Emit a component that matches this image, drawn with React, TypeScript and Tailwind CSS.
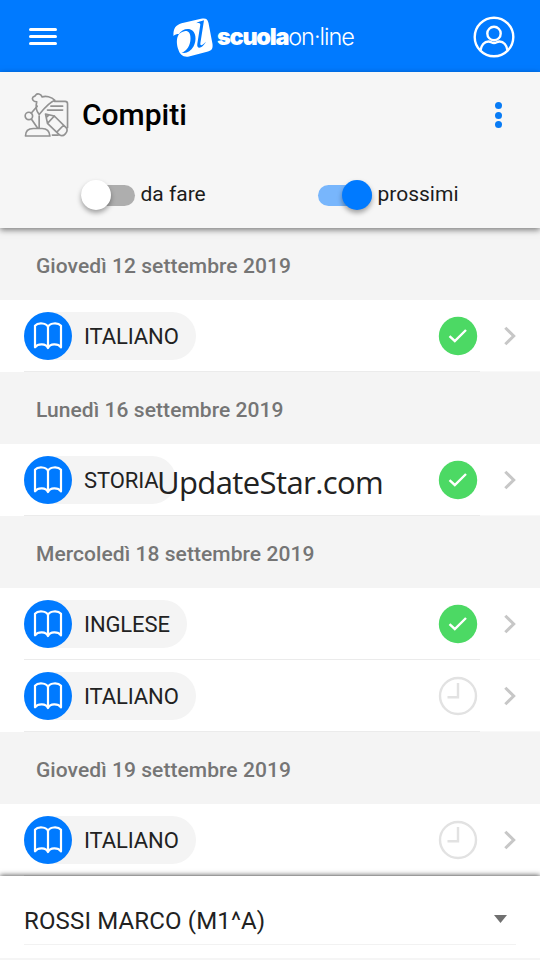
type Task = { subject: string; done: boolean };
type Day = { date: string; tasks: Task[] };

const days: Day[] = [
  { date: "Giovedì 12 settembre 2019", tasks: [{ subject: "ITALIANO", done: true }] },
  { date: "Lunedì 16 settembre 2019", tasks: [{ subject: "STORIA", done: true }] },
  {
    date: "Mercoledì 18 settembre 2019",
    tasks: [
      { subject: "INGLESE", done: true },
      { subject: "ITALIANO", done: false },
    ],
  },
  { date: "Giovedì 19 settembre 2019", tasks: [{ subject: "ITALIANO", done: false }] },
];

function Logo() {
  return (
    <div className="flex items-center pt-[3px]">
      <svg className="-mt-px" width="42" height="42" viewBox="0 0 42 42" fill="none">
        <path
          d="M1.500 20C1 12 4 9 9.500 7.200L29 2.800C34 1.900 35.500 3 36.500 7L40.500 28C41 33 39.500 34.500 36 35.500L17 40.500C11 41.500 8 38.500 6.500 34C4.500 29 4 22 7 18C4.500 18 3 18.500 1.500 20Z"
          fill="#fff"
        />
        <path
          d="M6.500 18.500C9 14 14.500 12 18.500 13.500C24 15.500 25 24 21.500 30.500C18.500 36 13.500 38 9.500 36.500C15 35.500 18.500 29 18.500 22.500C18.500 16.500 16 14.500 12.500 15.200C10 15.700 8 17 6.500 18.500Z"
          fill="#007aff"
        />
        <path
          d="M24 7.200C26.500 5.700 28.500 5.400 32 4.300L28.400 27C28 30.500 30.500 29.500 33.800 25.800C31.500 31.500 24.500 34.500 25.300 28L28.300 8.800C28.500 7.200 27 6.800 24 7.200Z"
          fill="#007aff"
        />
      </svg>
      <div className="-mt-0.5 ml-[3px] flex text-[23.5px] leading-none whitespace-nowrap text-white">
        <span className="font-black tracking-[-1.3px]">scuola</span>
        <span className="font-light tracking-[-1px]">on·line</span>
      </div>
    </div>
  );
}

function ProfileIcon() {
  return (
    <svg className="mt-px" width="42" height="42" viewBox="0 0 42 42" fill="none" stroke="#fff" strokeWidth="2.400">
      <circle cx="21" cy="21" r="19.300" />
      <circle cx="21" cy="17.500" r="6.700" />
      <path d="M7.500 34.500C8 29 11.500 25.500 15.500 25.500C18 25.500 18.500 27 21 27C23.500 27 24 25.500 26.500 25.500C30.500 25.500 34 29 34.500 34.500" />
    </svg>
  );
}

function HomeworkIcon() {
  return (
    <svg className="-mt-0.5" width="45" height="46" viewBox="0 0 46 46" fill="none" stroke="#929292" strokeWidth="1.700" strokeLinecap="round" strokeLinejoin="round">
      <path d="M1.500 44.500C1.500 39 5 36.800 9.500 36.800H18.500C23 36.800 26 39 26.500 44.500Z" />
      <circle cx="5" cy="24" r="3.800" />
      <path d="M7.500 21L13.500 14M7.500 27L14 36.500M15.500 24V36.500" />
      <path d="M13 9.500C9 9.500 8 6.500 9 5C10 4 11.500 4 12 2.500C13.500 .8 17 1 18.500 4.500C22 3.500 28 4 31.500 8C26 10 20 17 15.500 22.500C12.500 19 12 13.500 13 9.500Z" />
      <path d="M31 9H42C43.500 9 44.500 10 44.500 11.500V36M29 43.500H35M27.500 14H39.500M24 18H39.500" />
      <path d="M22 22L31 24L43.500 36.500C45.500 40 40.500 46 36.500 43.500L24 31.500ZM24 31.500L31 24M33.500 40.500L40.500 33.500M25.500 22.800L22.800 25.500" />
    </svg>
  );
}

function BookBadge() {
  return (
    <div className="flex h-12 w-12 items-center justify-center rounded-full bg-[#007aff]">
      <svg width="30" height="28" viewBox="0 0 30 28" fill="none" stroke="#fff" strokeWidth="2.200" strokeLinecap="round" strokeLinejoin="round">
        <path d="M15 5.200C14 .8 5 .3 2 3.700V25.300C5 21.300 13 21.300 15 26C17 21.300 25 21.300 28 25.300V3.700C25 .3 16 .8 15 5.200ZM15 5.200V25" />
      </svg>
    </div>
  );
}

function StatusIcon({ done }: { done: boolean }) {
  if (done) {
    return (
      <svg width="40" height="40" viewBox="0 0 40 40" fill="none">
        <circle cx="20" cy="20" r="19.200" fill="#4cd964" />
        <path d="M11.500 20.200L16.800 25L28 14" stroke="#fff" strokeWidth="2.400" />
      </svg>
    );
  }
  return (
    <svg width="40" height="40" viewBox="0 0 40 40" fill="none" stroke="#e2e2e2" strokeWidth="2.400">
      <circle cx="20" cy="20" r="18" />
      <path d="M20 7V21.200H9.500" />
    </svg>
  );
}

function TaskRow({ task }: { task: Task }) {
  return (
    <div className="flex h-18 bg-white pl-6">
      <div className="flex w-[456px] items-center justify-between border-b border-[#ebebeb]">
        <div className="flex h-12 items-center rounded-full bg-[#f4f4f4] pr-[17px]">
          <BookBadge />
          <span className="mt-0.5 ml-3 text-[22px] leading-none tracking-[-0.1px] text-[#222]">{task.subject}</span>
        </div>
        <div className="pt-px pr-0.5">
          <StatusIcon done={task.done} />
        </div>
      </div>
      <div className="flex flex-1 items-center border-b border-[#f8f8f8] pl-6">
        <svg width="12" height="20" viewBox="0 0 12 20" fill="none" stroke="#c7c7c7" strokeWidth="3">
          <path d="M1.300 1.700L9.700 10L1.300 18.300" />
        </svg>
      </div>
    </div>
  );
}

function Toggle({ label, on }: { label: string; on: boolean }) {
  return (
    <div className="flex items-center">
      <div className={`flex h-[21px] w-[54px] items-center rounded-full ${on ? "justify-end bg-[#78b6fc]" : "bg-[#aeaeae]"}`}>
        <div className={`h-[30px] w-[30px] shrink-0 rounded-full shadow-[0_3px_5px_rgba(0,0,0,0.35)] ${on ? "bg-[#007aff]" : "bg-white"}`} />
      </div>
      <span className="-mt-0.5 ml-[5.500px] text-[21px] leading-none text-[#1c1c1c]">{label}</span>
    </div>
  );
}

export default function App() {
  return (
    <div className="relative flex h-[960px] w-[540px] flex-col overflow-hidden bg-white font-['Roboto',sans-serif]">
      <header className="flex h-18 shrink-0 items-center bg-[#007aff] pr-[25px] pl-[29px] font-['Inter',sans-serif]">
        <div className="mr-[115px] flex w-7 flex-col gap-1">
          <div className="h-[3px] rounded-full bg-white" />
          <div className="h-[3px] rounded-full bg-white" />
          <div className="h-[3px] rounded-full bg-white" />
        </div>
        <Logo />
        <div className="ml-auto">
          <ProfileIcon />
        </div>
      </header>

      <section className="z-10 h-[156px] shrink-0 bg-[#f6f6f6] shadow-[0_2px_6px_rgba(0,0,0,0.5)]">
        <div className="flex h-[88px] items-center pr-[38px] pl-6">
          <HomeworkIcon />
          <h1 className="-mt-0.5 ml-[13px] flex-1 text-[30px] leading-none font-medium text-black">Compiti</h1>
          <div className="-mt-0.5 flex flex-col gap-[2.500px]">
            <div className="h-[7px] w-[7px] rounded-full bg-[#087bf5]" />
            <div className="h-[7px] w-[7px] rounded-full bg-[#087bf5]" />
            <div className="h-[7px] w-[7px] rounded-full bg-[#087bf5]" />
          </div>
        </div>
        <div className="flex h-[70px] items-center pl-[81px]">
          <div className="w-[237px]">
            <Toggle label="da fare" on={false} />
          </div>
          <Toggle label="prossimi" on />
        </div>
      </section>

      <main className="h-[648px] shrink-0">
        {days.map((day) => (
          <section key={day.date}>
            <h2 className="flex h-18 items-center bg-[#f4f4f4] pt-1 pl-9 text-[21px] leading-none font-medium tracking-[0.06px] text-[#757575]">
              {day.date}
            </h2>
            {day.tasks.map((task, i) => (
              <TaskRow key={i} task={task} />
            ))}
          </section>
        ))}
      </main>

      <footer className="z-10 h-[84px] shrink-0 border-b-2 border-[#f5f5f5] bg-white px-6 shadow-[0_-1px_5px_rgba(0,0,0,0.6)]">
        <div className="flex h-[69px] items-end justify-between border-b border-[#f2f2f2] pb-[11px]">
          <span className="text-[24px] leading-none tracking-[0.15px] text-[#222]">ROSSI MARCO (M1^A)</span>
          <svg className="mr-[9px] mb-2.5" width="13" height="8" viewBox="0 0 13 8" fill="#707070">
            <path d="M0 0H13L6.500 8Z" />
          </svg>
        </div>
      </footer>

      {/* Watermark over the list */}
      <div className="absolute top-[462px] left-[157px] z-20 font-['Open_Sans',sans-serif] text-[31px] leading-[40px] tracking-[-0.6px] whitespace-nowrap text-[#222]">
        UpdateStar.com
      </div>
    </div>
  );
}
